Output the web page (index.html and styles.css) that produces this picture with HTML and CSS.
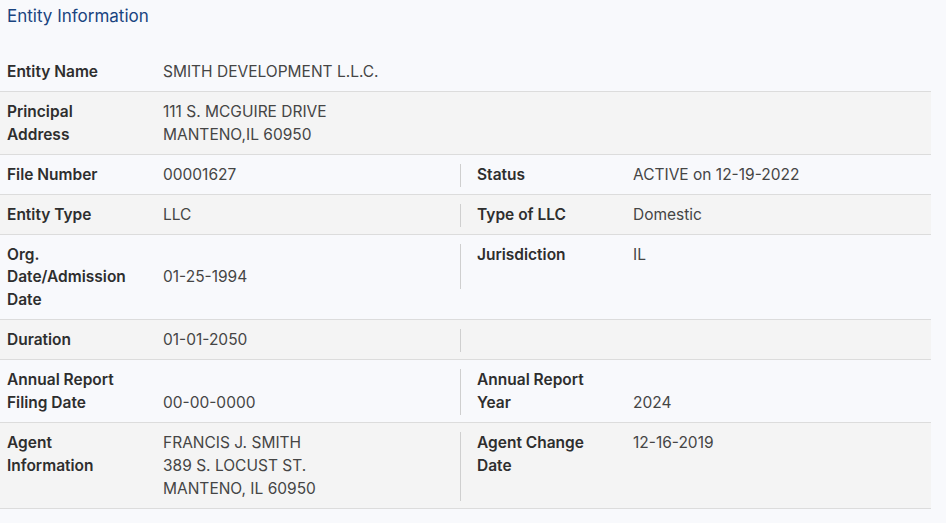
FILE: index.html
```html
<!DOCTYPE html>
<html lang="en">
<head>
<meta charset="utf-8">
<title>Entity Information</title>
<link rel="stylesheet" href="styles.css">
</head>
<body>
<div class="page">
  <h2 class="title">Entity Information</h2>
  <div class="table">
    <div class="row">
      <div class="cell"><div class="label">Entity Name</div><div class="value">SMITH DEVELOPMENT L.L.C.</div></div>
    </div>
    <div class="row alt">
      <div class="cell"><div class="label">Principal<br>Address</div><div class="value">111 S. MCGUIRE DRIVE<br>MANTENO,IL 60950</div></div>
    </div>
    <div class="row">
      <div class="cell"><div class="label">File Number</div><div class="value">00001627</div></div>
      <div class="cell right"><div class="label">Status</div><div class="value">ACTIVE on 12-19-2022</div></div>
    </div>
    <div class="row alt">
      <div class="cell"><div class="label">Entity Type</div><div class="value">LLC</div></div>
      <div class="cell right"><div class="label">Type of LLC</div><div class="value">Domestic</div></div>
    </div>
    <div class="row">
      <div class="cell"><div class="label">Org.<br>Date/Admission<br>Date</div><div class="value mid">01-25-1994</div></div>
      <div class="cell right two"><div class="label">Jurisdiction</div><div class="value">IL</div></div>
    </div>
    <div class="row alt">
      <div class="cell"><div class="label">Duration</div><div class="value">01-01-2050</div></div>
      <div class="cell right"><div class="label">&nbsp;</div><div class="value"></div></div>
    </div>
    <div class="row">
      <div class="cell"><div class="label">Annual Report<br>Filing Date</div><div class="value end">00-00-0000</div></div>
      <div class="cell right"><div class="label">Annual Report<br>Year</div><div class="value end">2024</div></div>
    </div>
    <div class="row alt">
      <div class="cell"><div class="label">Agent<br>Information</div><div class="value">FRANCIS J. SMITH<br>389 S. LOCUST ST.<br>MANTENO, IL 60950</div></div>
      <div class="cell right three"><div class="label">Agent Change<br>Date</div><div class="value">12-16-2019</div></div>
    </div>
  </div>
</div>
</body>
</html>
```
FILE: styles.css
```css
html, body {
  margin: 0;
  padding: 0;
  background: #f8f9fc;
}
body {
  font-family: Inter, "Noto Sans", "Liberation Sans", sans-serif;
  font-size: 15.5px;
  color: #2b2b2b;
}
.page {
  width: 931px;
}
.title {
  margin: 6px 0 26px 7px;
  font-size: 17px;
  line-height: 20px;
  font-weight: 400;
  color: #1a4480;
}
.row {
  display: flex;
  align-items: flex-start;
  padding: 9px 0 7px;
  border-bottom: 1px solid #dcdcdc;
  line-height: 22.9px;
}
.row.alt {
  background: #f4f4f4;
}
.cell {
  display: flex;
  width: 453px;
  padding-left: 7px;
  align-self: stretch;
}
.cell.right {
  align-self: flex-start;
  border-left: 1px solid #cfcfcf;
  padding-left: 16px;
  width: auto;
  flex: 1;
}
.cell.right.two { min-height: 45.8px; }
.cell.right.three { min-height: 68.7px; }
.label {
  width: 156px;
  flex: none;
  font-weight: 600;
  color: #2e2e2e;
}
.value {
  color: #454545;
}
.value.mid { align-self: center; }
.value.end { align-self: flex-end; }
```
